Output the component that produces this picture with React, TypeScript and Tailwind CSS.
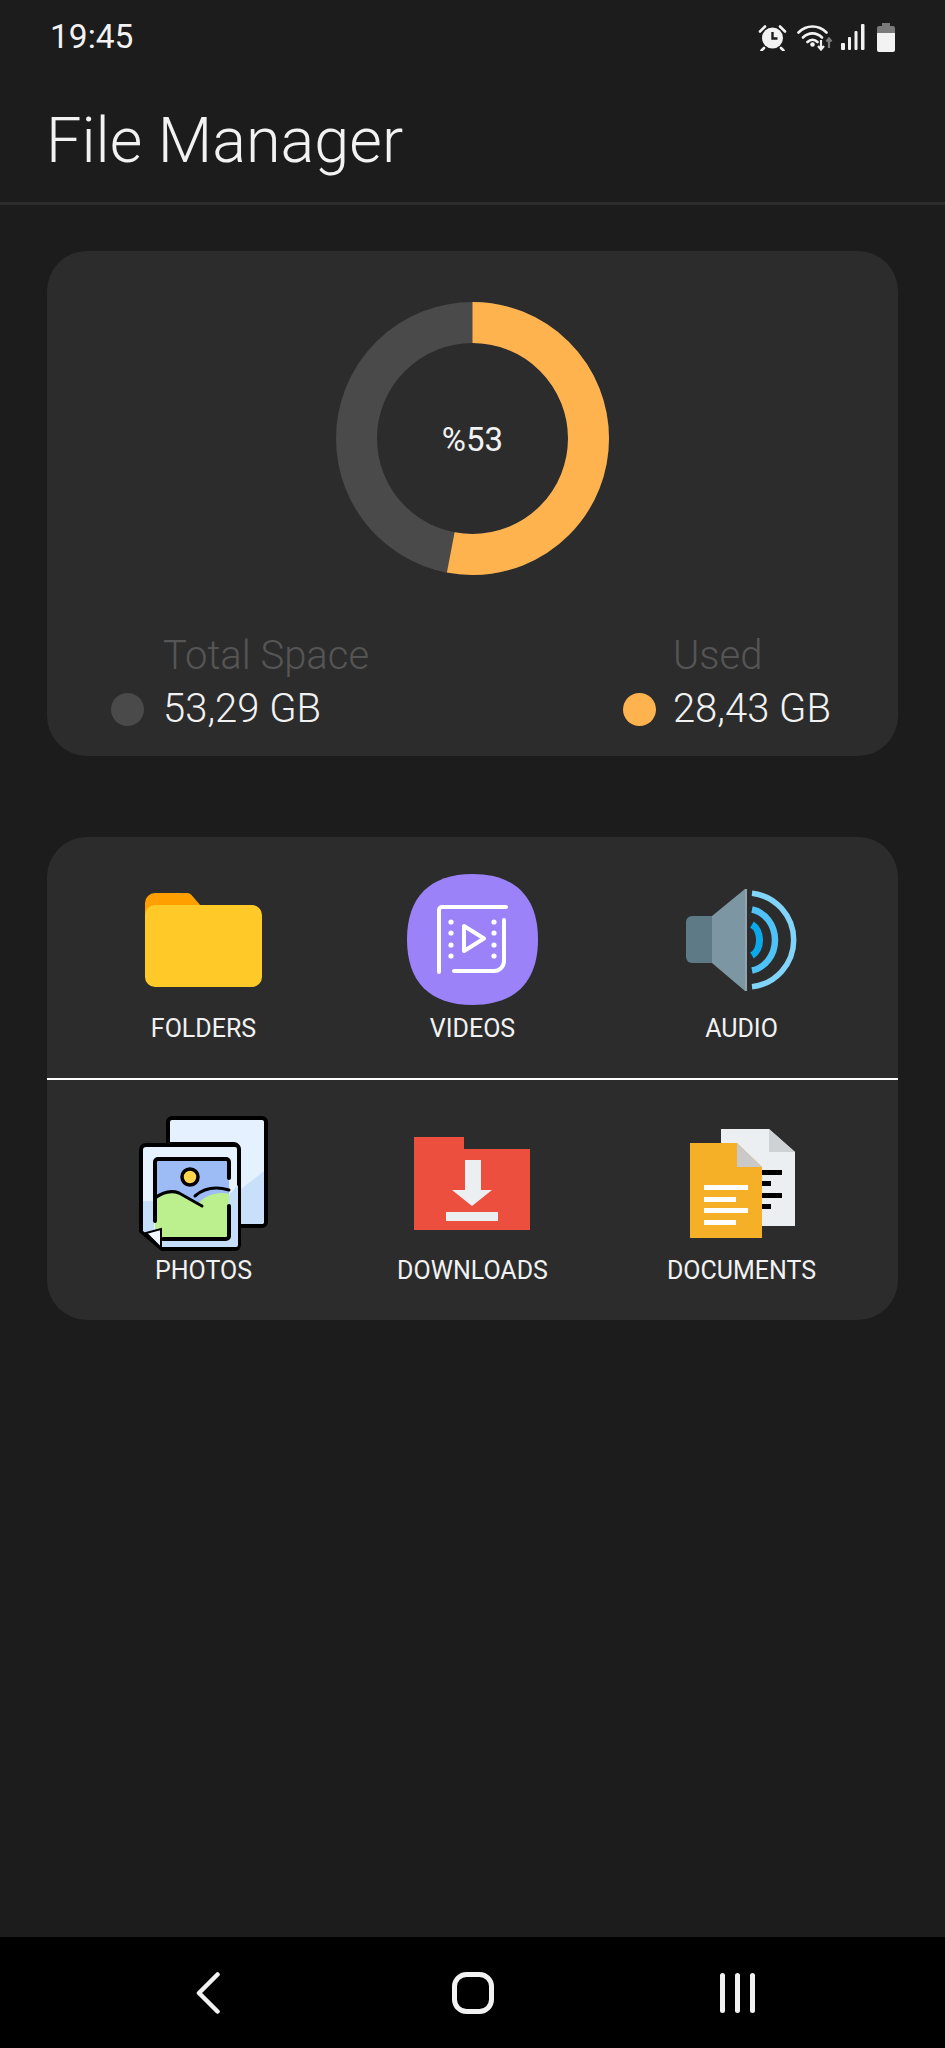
import React from "react";

const font = { fontFamily: "Roboto, sans-serif" };

const AlarmIcon = () => (
  <svg width="29" height="27" viewBox="0 0 29 27" fill="none">
    <circle cx="14.5" cy="14" r="10.5" fill="#f2f2f2" />
    <path d="M14.5 8v6.5h5" stroke="#1c1c1c" strokeWidth="2.4" />
    <path d="M2 7.5 7 2.5M27 7.5 22 2.5M6 24l-2.5 2.5M23 24l2.5 2.5" stroke="#f2f2f2" strokeWidth="2.6" strokeLinecap="round" />
  </svg>
);

const WifiIcon = () => (
  <svg width="36" height="27" viewBox="0 0 36 27" fill="none">
    <path d="M1.5 8.5C9.5 .5 21.5 .5 29.5 8.5M6 13.5c5.5-5.5 13.5-5.5 19 0M10.5 18c3-3 7-3 10 0" stroke="#f2f2f2" strokeWidth="2.6" strokeLinecap="round" />
    <circle cx="15.5" cy="20.5" r="2.3" fill="#f2f2f2" />
    <path d="M24 16v8M21 22l3 3.5 3-3.5" stroke="#f2f2f2" strokeWidth="2.2" />
    <path d="M32 24v-9M29.5 17.5l2.5-3 2.5 3" stroke="#7c7c7c" strokeWidth="2.2" />
  </svg>
);

const SignalIcon = () => (
  <svg width="24" height="26" viewBox="0 0 24 26" fill="#f2f2f2">
    <rect x="0" y="19" width="4" height="7" rx="1" />
    <rect x="7" y="13" width="3" height="13" rx="1" />
    <rect x="13.5" y="7" width="3" height="19" rx="1" />
    <rect x="20" y="0" width="3.5" height="26" rx="1" />
  </svg>
);

const BatteryIcon = () => (
  <svg width="18" height="29" viewBox="0 0 18 29">
    <path d="M5 0h8v3h3a2 2 0 0 1 2 2v5H0V5a2 2 0 0 1 2-2h3z" fill="#7a7a7a" />
    <path d="M0 10h18v17a2 2 0 0 1-2 2H2a2 2 0 0 1-2-2z" fill="#f2f2f2" />
  </svg>
);

const Donut = () => (
  <svg width="273" height="273" viewBox="0 0 273 273" fill="none">
    <circle cx="136.5" cy="136.5" r="116" stroke="#4a4a4a" strokeWidth="41" />
    <circle
      cx="136.5"
      cy="136.5"
      r="116"
      stroke="#ffb34f"
      strokeWidth="41"
      pathLength={100}
      strokeDasharray="53 47"
      transform="rotate(-90 136.5 136.5)"
    />
  </svg>
);

const FolderIcon = () => (
  <svg width="117" height="94" viewBox="0 0 117 94">
    <path d="M0 40V10A10 10 0 0 1 10 0h32a6 6 0 0 1 4.5 2L56 13v27z" fill="#ffa000" />
    <rect x="0" y="12" width="117" height="82" rx="10" fill="#ffca28" />
  </svg>
);

const VideoIcon = () => (
  <svg width="131" height="131" viewBox="0 0 131 131" fill="none">
    <path d="M65.5 0C108 0 131 23 131 65.5S108 131 65.5 131 0 108 0 65.5 23 0 65.5 0z" fill="#9b82f8" />
    <path d="M99 33H35a3 3 0 0 0-3 3v62M97 46v41a10 10 0 0 1-10 10H47" stroke="#fff" strokeWidth="4" strokeLinecap="round" />
    <path d="M57 52v25l20-12.5z" stroke="#fff" strokeWidth="4" strokeLinejoin="round" />
    <g fill="#fff">
      <circle cx="44" cy="48" r="2.6" />
      <circle cx="44" cy="59" r="2.6" />
      <circle cx="44" cy="71" r="2.6" />
      <circle cx="44" cy="82" r="2.6" />
      <circle cx="87" cy="48" r="2.6" />
      <circle cx="87" cy="59" r="2.6" />
      <circle cx="87" cy="71" r="2.6" />
      <circle cx="87" cy="82" r="2.6" />
    </g>
  </svg>
);

const AudioIcon = () => (
  <svg width="111" height="104" viewBox="0 0 111 104" fill="none">
    <path d="M26 28H6a6 6 0 0 0-6 6v35a6 6 0 0 0 6 6h20z" fill="#5f7a87" />
    <path d="M26 28 59 1v102L26 75z" fill="#7d96a3" />
    <path d="M59 1h2v102h-2z" fill="#90a4ae" />
    <path d="M66 5.3A47 47 0 0 1 66 98.7" stroke="#81d4fa" strokeWidth="5.5" />
    <path d="M66 21.5A28 31 0 0 1 66 82.5" stroke="#4fc3f7" strokeWidth="6.5" />
    <path d="M66 36.4A12.5 17 0 0 1 66 67.6" stroke="#0ba9ea" strokeWidth="7" />
  </svg>
);

const PhotosIcon = () => (
  <svg width="130" height="135" viewBox="1 0 130 135" fill="none">
    <path d="M34 2h90a4 4 0 0 1 4 4v100a4 4 0 0 1-4 4H100V32a4 4 0 0 0-4-4H30V6a4 4 0 0 1 4-4z" fill="#e6f1ff" stroke="#000" strokeWidth="4" />
    <path d="M126 55v50a3 3 0 0 1-3 3h-21V74z" fill="#c9e0fb" />
    <path d="M8 29h89a4 4 0 0 1 4 4v96a4 4 0 0 1-4 4H24L3 115V34a5 5 0 0 1 5-5z" fill="#e6f2ff" stroke="#000" strokeWidth="4" />
    <path d="M5 85v30l19 16h74a2 2 0 0 0 2-2v-60l-9 10v44H16V85z" fill="#c5dffb" />
    <path d="M17 46a3 3 0 0 1 3-3h68a3 3 0 0 1 3 3v74a3 3 0 0 1-3 3H20a3 3 0 0 1-3-3z" fill="#9dbcf6" />
    <path d="M17 82c8-6 16-8 24-5l20 10c6-8 20-12 30-9v42a3 3 0 0 1-3 3H20a3 3 0 0 1-3-3z" fill="#bcf08f" />
    <path d="M17 82c8-6 16-8 24-5l23 13M57 80c8-7 20-10 34-6" stroke="#000" strokeWidth="3" strokeLinecap="round" />
    <path d="M17 105V46a3 3 0 0 1 3-3h68a3 3 0 0 1 3 3v16M91 90v30a3 3 0 0 1-3 3H25" stroke="#000" strokeWidth="4" strokeLinecap="round" />
    <circle cx="52" cy="61" r="8" fill="#ffd54f" stroke="#000" strokeWidth="3.5" />
    <path d="M8 117l15-4v19z" fill="#f4f8ff" stroke="#000" strokeWidth="2" />
  </svg>
);

const DownloadsIcon = () => (
  <svg width="117" height="93" viewBox="0 0 117 93">
    <path d="M0 0h50v12h66v81H0z" fill="#ec4f3e" />
    <path d="M51 23h16v30h11L58 69 38 53h13z" fill="#eceff1" />
    <rect x="32" y="75" width="52" height="9" fill="#eceff1" />
  </svg>
);

const DocumentsIcon = () => (
  <svg width="106" height="110" viewBox="0 0 106 110">
    <path d="M32 0h48l26 23v74H32z" fill="#eceff1" />
    <path d="M80 0l26 23H80z" fill="#cfd2d4" />
    <g fill="#000">
      <rect x="73" y="41" width="20" height="5" />
      <rect x="73" y="52" width="9" height="5" />
      <rect x="73" y="64" width="20" height="5" />
      <rect x="73" y="75" width="9" height="5" />
    </g>
    <path d="M1 14h47l25 24v71H1z" fill="#f5b027" />
    <path d="M48 14l25 24H48z" fill="#c9c9c9" />
    <g fill="#fff">
      <rect x="15" y="56" width="44" height="5" />
      <rect x="15" y="68" width="32" height="5" />
      <rect x="15" y="79" width="44" height="5" />
      <rect x="15" y="91" width="32" height="5" />
    </g>
  </svg>
);

const topRow = [
  { label: "FOLDERS", icon: <FolderIcon /> },
  { label: "VIDEOS", icon: <VideoIcon /> },
  { label: "AUDIO", icon: <AudioIcon /> },
];

const bottomRow = [
  { label: "PHOTOS", icon: <PhotosIcon /> },
  { label: "DOWNLOADS", icon: <DownloadsIcon /> },
  { label: "DOCUMENTS", icon: <DocumentsIcon /> },
];

const App = () => {
  return (
    <div className="flex min-h-[2048px] flex-col bg-[#1c1c1c] text-[#f2f2f2]" style={font}>
      {/* Status bar */}
      <div className="flex h-[74px] items-center justify-between pl-[50px] pr-[50px]">
        <span className="text-[33.5px] leading-none">19:45</span>
        <div className="flex items-center">
          <div className="mr-[10px]"><AlarmIcon /></div>
          <div className="mr-[8px]"><WifiIcon /></div>
          <div className="mr-[12px]"><SignalIcon /></div>
          <BatteryIcon />
        </div>
      </div>

      {/* Header */}
      <div className="h-[131px] border-b-[3px] border-[#2d2d2d] pl-[46px]">
        <h1 className="pt-[32px] text-[63px] font-light leading-[70px]">File Manager</h1>
      </div>

      <main className="flex flex-1 flex-col gap-[81px] px-[47px] pt-[46px]">
        {/* Storage card */}
        <section className="h-[505px] rounded-[40px] bg-[#2c2c2c] pt-[51px]">
          <div className="relative mx-auto h-[273px] w-[273px]">
            <Donut />
            <div className="absolute inset-0 flex items-center justify-center pt-[2px] text-[33px]">%53</div>
          </div>
          <div className="mt-[59px] flex justify-between pl-[64px] pr-[67px]">
            <div className="flex flex-col">
              <span className="pl-[52px] text-[40px] font-light leading-[44px] text-[#555555]">Total Space</span>
              <div className="mt-[9px] flex items-center gap-[19px]">
                <span className="h-[33px] w-[33px] rounded-full bg-[#4a4a4a]" />
                <span className="text-[40px] font-light leading-[44px]">53,29 GB</span>
              </div>
            </div>
            <div className="flex flex-col">
              <span className="pl-[50px] text-[40px] font-light leading-[44px] text-[#555555]">Used</span>
              <div className="mt-[9px] flex items-center gap-[17px]">
                <span className="h-[33px] w-[33px] rounded-full bg-[#ffb34f]" />
                <span className="text-[40px] font-light leading-[44px]">28,43 GB</span>
              </div>
            </div>
          </div>
        </section>

        {/* Categories card */}
        <section className="h-[483px] rounded-[40px] bg-[#2c2c2c]">
          <div className="grid h-[243px] grid-cols-3 border-b-2 border-white px-[22px] pt-[37px]">
            {topRow.map((item) => (
              <div key={item.label} className="flex flex-col items-center">
                <div className="flex h-[131px] items-center justify-center">{item.icon}</div>
                <span className="mt-[10px] text-[25px] leading-[28px]">{item.label}</span>
              </div>
            ))}
          </div>
          <div className="grid grid-cols-3 px-[22px] pt-[36px]">
            {bottomRow.map((item) => (
              <div key={item.label} className="flex flex-col items-center">
                <div className="flex h-[135px] items-center justify-center">{item.icon}</div>
                <span className="mt-[6px] text-[25px] leading-[28px]">{item.label}</span>
              </div>
            ))}
          </div>
        </section>
      </main>

      {/* Navigation bar */}
      <nav className="flex h-[111px] items-start bg-black pt-[35px] pl-[196px]">
        <div className="flex items-center">
          <svg width="24" height="42" viewBox="0 0 24 42" fill="none">
            <path d="M21.5 2.5 3 21l18.5 18.5" stroke="#f2f2f2" strokeWidth="4.5" strokeLinecap="round" strokeLinejoin="round" />
          </svg>
          <svg className="ml-[232px]" width="42" height="42" viewBox="0 0 42 42" fill="none">
            <rect x="2.5" y="2.5" width="37" height="37" rx="12" stroke="#f2f2f2" strokeWidth="5" />
          </svg>
          <svg className="ml-[226px]" width="35" height="40" viewBox="0 0 35 40" fill="none">
            <path d="M2.5 2.5v35M17.5 2.5v35M32.5 2.5v35" stroke="#f2f2f2" strokeWidth="5" strokeLinecap="round" />
          </svg>
        </div>
      </nav>
    </div>
  );
};

export default App;
